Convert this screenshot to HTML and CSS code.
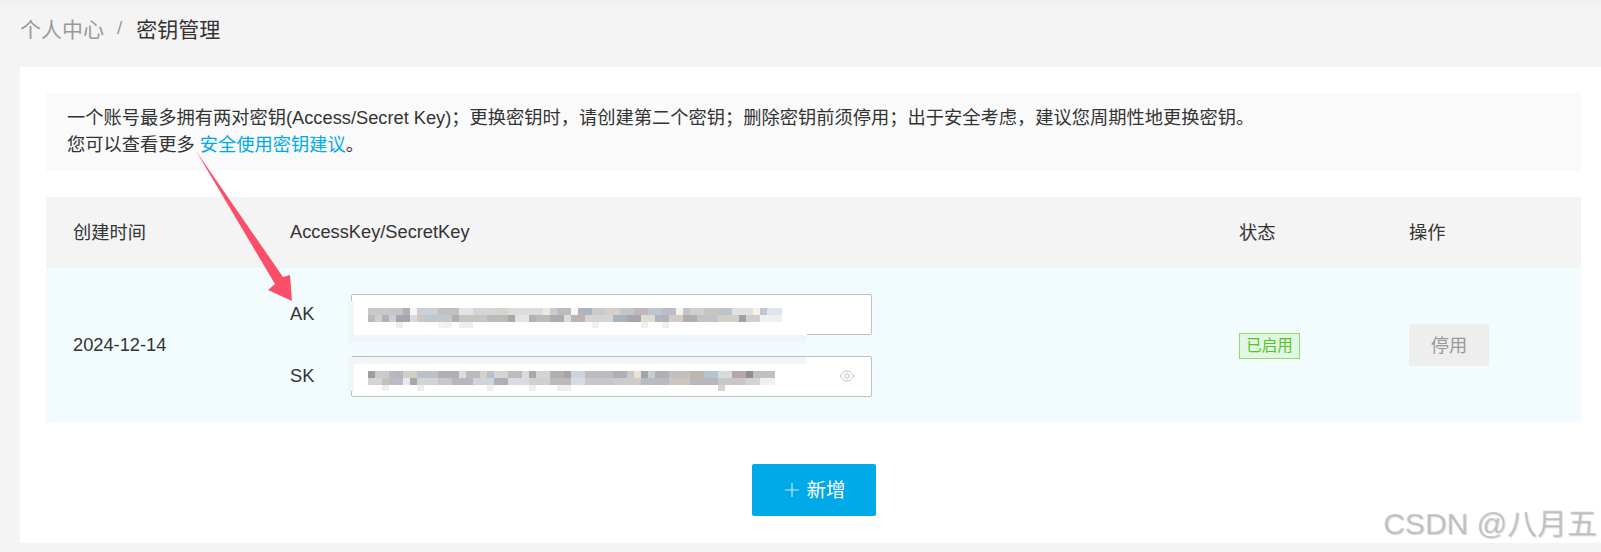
FILE: index.html
```html
<!DOCTYPE html>
<html lang="zh-CN">
<head>
<meta charset="utf-8">
<title>密钥管理</title>
<link rel="stylesheet" href="styles.css">
</head>
<body>
<div class="page">
  <nav class="crumbs">
    <span class="crumb-parent">个人中心</span>
    <span class="crumb-sep">/</span>
    <span class="crumb-current">密钥管理</span>
  </nav>
  <main class="card">
    <section class="notice">
      <p>一个账号最多拥有两对密钥(Access/Secret Key)；更换密钥时，请创建第二个密钥；删除密钥前须停用；出于安全考虑，建议您周期性地更换密钥。</p>
      <p>您可以查看更多 <a class="link">安全使用密钥建议</a>。</p>
    </section>
    <section class="table">
      <div class="thead">
        <div class="cjk-cell">创建时间</div>
        <div class="latin-cell">AccessKey/SecretKey</div>
        <div class="cjk-cell">状态</div>
        <div class="cjk-cell">操作</div>
      </div>
      <div class="tbody">
        <div class="latin-cell">2024-12-14</div>
        <div class="keys">
          <div class="key-row">
            <span class="key-label">AK</span>
            <div class="key-input"><div class="mosaic mosaic-ak"></div></div>
          </div>
          <div class="key-row">
            <span class="key-label">SK</span>
            <div class="key-input">
              <div class="mosaic mosaic-sk"></div>
              <svg class="eye" viewBox="0 0 16 16" width="16" height="16" fill="none">
                <path d="M1 8 C3.5 4.3 5.6 3 8 3 C10.4 3 12.5 4.3 15 8 C12.5 11.7 10.4 13 8 13 C5.6 13 3.5 11.7 1 8 Z" stroke="#bdbdbd" stroke-width="1"/>
                <circle cx="8" cy="8" r="2.2" stroke="#bdbdbd" stroke-width="1"/>
              </svg>
            </div>
          </div>
        </div>
        <div><span class="tag">已启用</span></div>
        <div><button class="btn-disabled">停用</button></div>
      </div>
    </section>
    <div class="actions">
      <button class="btn-add">
        <svg class="plus" viewBox="0 0 14 14" width="14" height="14"><path d="M7 0 V14 M0 7 H14" stroke="#bfe9f9" stroke-width="1.2" fill="none"/></svg>
        <span>新增</span>
      </button>
    </div>
  </main>
  <div class="smudge smudge-a"></div>
  <div class="smudge smudge-b"></div>
  <div class="smudge smudge-c"></div>
  <div class="smudge smudge-d"></div>
  <div class="smudge smudge-e"></div>
  <svg class="arrow" width="1601" height="552" viewBox="0 0 1601 552">
    <polygon points="196,151 283,277 290,275 292,301 268,290 275,284" fill="#fb4f69"/>
  </svg>
  <div class="watermark">CSDN @八月五</div>
</div>
</body>
</html>
```
FILE: styles.css
```css
* { box-sizing: border-box; }
html, body { margin: 0; padding: 0; }
body {
  width: 1601px;
  height: 552px;
  overflow: hidden;
  background: #f4f4f4;
  font-family: "Liberation Sans", "Noto Sans CJK SC", sans-serif;
  font-size: 18.25px;
  color: #333;
}
p { margin: 0; }
.page { position: relative; height: 552px; background: linear-gradient(#efefef, #f4f4f4 6px); }

.crumbs {
  height: 67px;
  padding: 0 0 11px 20px;
  display: flex;
  align-items: center;
  font-size: 21px;
}
.crumb-parent { color: #999; }
.crumb-sep { color: #999; margin: 0 14px 0 13px; font-size: 19px; }
.crumb-current { color: #333; }

.card {
  margin-left: 20px;
  height: 476px;
  background: #fff;
  padding: 26px 20px 0 26px;
}
.notice {
  height: 78px;
  background: #fafafa;
  padding: 11px 21px;
  line-height: 27px;
}
.link { color: #00a9e8; }

.table { margin-top: 26px; }
.thead, .tbody {
  display: grid;
  grid-template-columns: 217px 949px 170px 172px;
  align-items: center;
  padding-left: 27px;
}
.thead { height: 71px; background: #f4f4f4; }
.tbody { height: 155px; background: #f2fbfe; }
.cjk-cell { margin-bottom: 3px; }
.latin-cell { margin-bottom: 2px; }

.keys { display: flex; flex-direction: column; gap: 21px; }
.key-row { display: flex; align-items: center; }
.key-label { width: 61px; padding-bottom: 2px; }
.key-input {
  position: relative;
  width: 521px;
  height: 41px;
  background: #fff;
  border: 1px solid #bfbfc2;
  border-radius: 2px;
}
.mosaic {
  position: absolute;
  top: 13px;
  left: 16px;
  height: 20px;
  filter: blur(0.6px);
  background-repeat: no-repeat;
  background-size: 100% 7px;
  background-position: 0 0, 0 7px, 0 14px;
}
.mosaic-ak {
  width: 414px;
  background-image:
    linear-gradient(90deg, #ccc8c8 0 21px, #c6c6c6 0 35px, #aeb0b4 0 42px, #f6f6f6 0 49px, #ccd0d6 0 70px, #bfc0c4 0 91px, #e2e4e6 0 105px, #d5d5d5 0 126px, #d5d3cc 0 140px, #dcdcdc 0 175px, #ece8e2 0 182px, #c4ccd4 0 189px, #bcbcbc 0 203px, #f8f8f8 0 210px, #aeb4bc 0 224px, #c8cccc 0 238px, #d4d0c8 0 252px, #c6c6c6 0 266px, #c0b8b8 0 280px, #bcc6cc 0 294px, #bbc 0 308px, #f4f4ec 0 315px, #bfc5c9 0 322px, #cfcfcf 0 336px, #c8c4c0 0 350px, #bcc4c8 0 364px, #e0e2e4 0 385px, #f6f2ea 0 392px, #bec8d0 0 399px, #dfe4ec 0 414px),
    linear-gradient(90deg, #bbb 0 7px, #ccd0d4 0 14px, #b0b4b8 0 21px, #ccd 0 28px, #a8a6ac 0 42px, #d8dce0 0 49px, #cfc9b8 0 56px, #bcc8d0 0 70px, #c4c8cc 0 84px, #b0aeb0 0 91px, #c8c4c0 0 112px, #c0c8cc 0 119px, #bbb 0 140px, #a8a8a8 0 147px, #e4e4e4 0 161px, #b4b0b0 0 168px, #bbb 0 182px, #acacac 0 196px, #d4dce4 0 203px, #bcb4ac 0 217px, #d4d4d4 0 245px, #a8b4bc 0 259px, #a8a4b0 0 273px, #dcdcd4 0 287px, #b0b4c0 0 301px, #d4ccc4 0 315px, #b0aeb0 0 329px, #c0c4c8 0 350px, #d0d0c8 0 371px, #a0a0a0 0 378px, #d0d0c8 0 392px, #f0f0f0 0 414px),
    linear-gradient(90deg, transparent 0 28px, #eee 0 35px, transparent 0 70px, #f6f2ee 0 77px, #eef2f4 0 84px, transparent 0 91px, #eee 0 105px, transparent 0 224px, #f0f0f0 0 231px, transparent 0 273px, #f4eeea 0 280px, transparent 0 294px, #f2f0ee 0 301px, transparent 0 414px);
}
.mosaic-sk {
  width: 407px;
  top: 14px;
  background-image:
    linear-gradient(90deg, #9e9c9c 0 7px, #c8ccd2 0 21px, #bfb8b8 0 28px, #b4b8bc 0 35px, #cfcfc8 0 49px, #bcc0c8 0 70px, #b0b0b4 0 91px, #dcdcdc 0 98px, #bbb 0 112px, #d8d0c4 0 119px, #b8c0cc 0 126px, #d4d4d4 0 140px, #bcbcbc 0 154px, #dcdce0 0 161px, #a8a8a8 0 168px, #d4d4d4 0 182px, #b0b0b4 0 196px, #a8a4a4 0 203px, #ccd4e0 0 217px, #bcbcc0 0 245px, #b0b0b4 0 259px, #c8c8c8 0 266px, #ebe0d4 0 273px, #a4a4a8 0 280px, #c8cccc 0 287px, #aeb0b4 0 301px, #c0c0c0 0 322px, #c0b4b0 0 336px, #b8c4cc 0 350px, #d4dcdc 0 364px, #b4a8a8 0 378px, #8e8e90 0 385px, #c0c0c0 0 407px),
    linear-gradient(90deg, #d4d4d4 0 14px, #c4c0b8 0 21px, #b8bcc4 0 35px, #e8eaee 0 42px, #a8a8ac 0 49px, #d4d4d4 0 70px, #c8c8cc 0 84px, #b8b8bc 0 105px, #d0d4dc 0 126px, #b0b0b4 0 140px, #d8dce0 0 161px, #d0d0d0 0 182px, #bbb 0 203px, #d8dce0 0 217px, #c4c8cc 0 245px, #ccc 0 273px, #b8bcc0 0 301px, #ccc4c0 0 322px, #b8b8bc 0 350px, #c8c8c8 0 378px, #d4d4d4 0 392px, #f0f0f0 0 407px),
    linear-gradient(90deg, transparent 0 14px, #eee 0 21px, transparent 0 49px, #eee 0 56px, transparent 0 119px, #f0f0f0 0 126px, transparent 0 161px, #eee 0 168px, transparent 0 189px, #eee 0 203px, transparent 0 350px, #d8d4d0 0 357px, transparent 0 407px);
}
.eye { position: absolute; top: 11px; right: 16px; }

.tag {
  display: inline-block;
  width: 61px;
  height: 26px;
  line-height: 23px;
  text-align: center;
  font-size: 15.5px;
  color: #52c41a;
  background: #e2f6e8;
  border: 1px solid #95de64;
}
.btn-disabled {
  display: block;
  width: 80px;
  height: 42px;
  margin-bottom: 2px;
  border: 0;
  border-radius: 2px;
  background: #eee;
  color: #999;
  font: inherit;
  padding: 0 0 2px;
}

.actions { display: flex; justify-content: center; margin-top: 41px; padding-left: 1px; }
.btn-add {
  display: flex;
  align-items: center;
  justify-content: center;
  gap: 7px;
  width: 124px;
  height: 52px;
  border: 0;
  border-radius: 2px;
  background: #00a9e8;
  color: #fff;
  font: inherit;
  font-size: 19.5px;
  padding: 0 0 3px 3px;
}
.plus { display: block; margin-top: 2px; }

.smudge { position: absolute; }
.smudge-a { left: 354px; top: 328px; width: 453px; height: 7px; background: #fff; }
.smudge-b { left: 348px; top: 335px; width: 459px; height: 8px; background: #eef6f9; }
.smudge-c { left: 348px; top: 357px; width: 459px; height: 7px; background: #f4f5f6; }
.smudge-d { left: 348px; top: 301px; width: 6px; height: 34px; background: #eef6f8; }
.smudge-e { left: 348px; top: 364px; width: 6px; height: 27px; background: #eef6f8; }

.arrow { position: absolute; left: 0; top: 0; pointer-events: none; }
.watermark {
  position: absolute;
  right: 4px;
  top: 506px;
  font-size: 30px;
  line-height: 36px;
  color: rgba(170, 170, 170, 0.6);
  text-shadow: 1px 1px 1px rgba(150, 150, 150, 0.35);
  white-space: nowrap;
}
```
